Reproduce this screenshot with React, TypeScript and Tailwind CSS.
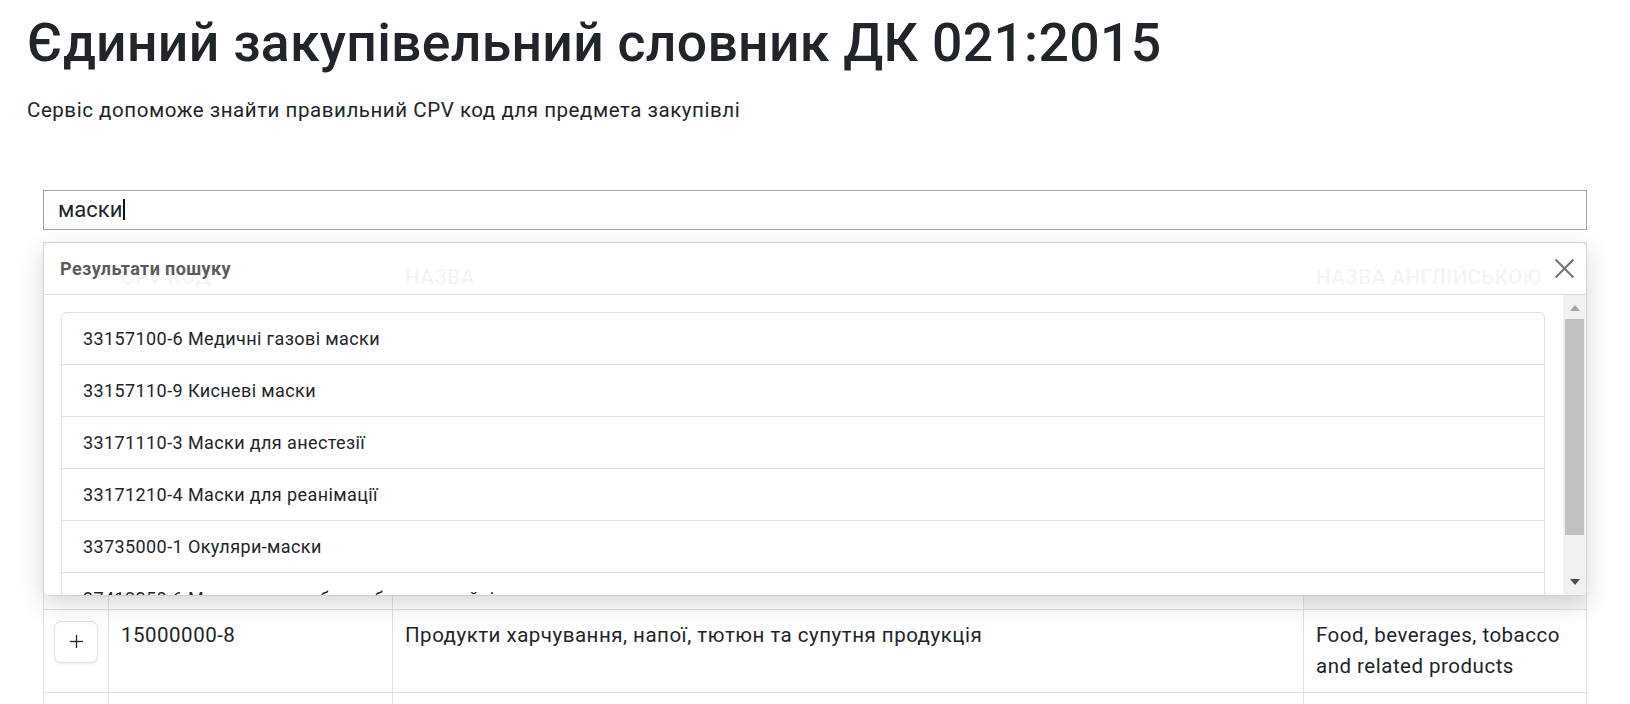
import React from "react";

const results = [
  "33157100-6 Медичні газові маски",
  "33157110-9 Кисневі маски",
  "33171110-3 Маски для анестезії",
  "33171210-4 Маски для реанімації",
  "33735000-1 Окуляри-маски",
  "37412250-6 Маски, ласти або трубки для дайвінгу",
];

const rows = [
  {
    code: "15000000-8",
    name: "Продукти харчування, напої, тютюн та супутня продукція",
    en: "Food, beverages, tobacco and related products",
  },
  {
    code: "03000000-1",
    name: "Сільськогосподарська, фермерська продукція, продукція рибальства, лісівництва та супутня продукція",
    en: "Agricultural, farming, fishing, forestry and related products",
  },
];

function PlusIcon() {
  return (
    <svg width="15" height="15" viewBox="0 0 16 16" fill="none" stroke="#212529" strokeWidth="1.4">
      <line x1="8" y1="1" x2="8" y2="15" />
      <line x1="1" y1="8" x2="15" y2="8" />
    </svg>
  );
}

function CloseIcon() {
  return (
    <svg width="21" height="21" viewBox="0 0 20 20" fill="none" stroke="#747474" strokeWidth="1.9">
      <line x1="1.5" y1="1.5" x2="18.5" y2="18.5" />
      <line x1="18.5" y1="1.5" x2="1.5" y2="18.5" />
    </svg>
  );
}

function FakeScrollbar() {
  return (
    <div className="flex w-[23px] shrink-0 flex-col bg-[#f1f1f1]">
      <div className="flex h-[24px] items-center justify-center pt-[2px]">
        <div className="h-0 w-0 border-x-[5.5px] border-b-[6px] border-x-transparent border-b-[#a3a3a3]" />
      </div>
      <div className="mx-[2px] h-[216px] bg-[#c1c1c1]" />
      <div className="flex-1" />
      <div className="flex h-[24px] items-center justify-center pb-[2px]">
        <div className="h-0 w-0 border-x-[5.5px] border-t-[6px] border-x-transparent border-t-[#505050]" />
      </div>
    </div>
  );
}

export default function App() {
  return (
    <div className="h-screen overflow-hidden bg-white font-['Roboto',sans-serif] text-[#212529]">
      <div className="px-[27px] pt-[11px]">
        <h1 className="text-[53.5px] font-medium leading-[1.2] tracking-[0.3px]">
          Єдиний закупівельний словник ДК 021:2015
        </h1>
        <p className="mt-[20px] text-[20.5px] leading-[1.5] tracking-[0.55px]">
          Сервіс допоможе знайти правильний CPV код для предмета закупівлі
        </p>

        <div className="mt-[64px] px-4">
          {/* search field */}
          <div className="flex h-[40px] items-center border border-[#a3a3a3] px-[14px] text-[22px] leading-none">
            <span>маски</span>
            <span className="ml-[1px] h-[21px] w-[2px] bg-[#111]" />
          </div>

          <div className="relative mt-[12px]">
            <table className="w-full table-fixed border-collapse border border-[#dee2e6] text-[20.5px] leading-[31px] tracking-[0.5px]">
              <colgroup>
                <col className="w-[65px]" />
                <col className="w-[284px]" />
                <col className="w-[911px]" />
                <col />
              </colgroup>
              <thead>
                <tr>
                  <th className="h-[367px] border border-[#dee2e6] px-3 py-3 align-top" />
                  <th className="border border-[#dee2e6] px-3 pt-[19px] text-left align-top font-medium uppercase">CPV код</th>
                  <th className="border border-[#dee2e6] px-3 pt-[19px] text-left align-top font-medium uppercase">Назва</th>
                  <th className="border border-[#dee2e6] bg-[#f7f7f7] px-3 pt-[19px] text-left align-top font-medium uppercase">
                    Назва англійською
                  </th>
                </tr>
              </thead>
              <tbody>
                {rows.map((r) => (
                  <tr key={r.code}>
                    <td className="border border-[#dee2e6] px-[10px] py-[11px] align-top">
                      <button className="flex h-[42px] w-[44px] items-center justify-center rounded-[7px] border border-[#dee2e6] bg-white shadow-[0_1px_2px_rgba(0,0,0,0.08)]">
                        <PlusIcon />
                      </button>
                    </td>
                    <td className="border border-[#dee2e6] px-3 py-[10px] align-top">{r.code}</td>
                    <td className="border border-[#dee2e6] px-3 py-[10px] align-top">{r.name}</td>
                    <td className="border border-[#dee2e6] px-3 py-[10px] align-top">{r.en}</td>
                  </tr>
                ))}
              </tbody>
            </table>

            {/* search results popup */}
            <div className="absolute left-0 right-0 top-0 flex h-[354px] flex-col overflow-hidden rounded-[6px] border border-[#d2d2d2] shadow-[0_8px_24px_rgba(0,0,0,0.16)]">
              <div className="flex h-[52px] shrink-0 items-center justify-between border-b border-[#dcdcdc] bg-white/95 pl-[16px] pr-[11px]">
                <span className="text-[18px] font-bold tracking-[0.4px] text-[#5c5c5c]">Результати пошуку</span>
                <CloseIcon />
              </div>
              <div className="flex min-h-0 flex-1 bg-white">
                <div className="min-w-0 flex-1 overflow-hidden pb-0 pl-[17px] pr-[18px] pt-[17px]">
                  <ul className="rounded-t-[6px] border border-[#e0e0e6]">
                    {results.map((item) => (
                      <li
                        key={item}
                        className="flex h-[52px] items-center border-b border-[#e0e0e6] px-[21px] text-[18px] tracking-[0.4px] last:border-b-0"
                      >
                        {item}
                      </li>
                    ))}
                  </ul>
                </div>
                <FakeScrollbar />
              </div>
            </div>
          </div>
        </div>
      </div>
    </div>
  );
}
